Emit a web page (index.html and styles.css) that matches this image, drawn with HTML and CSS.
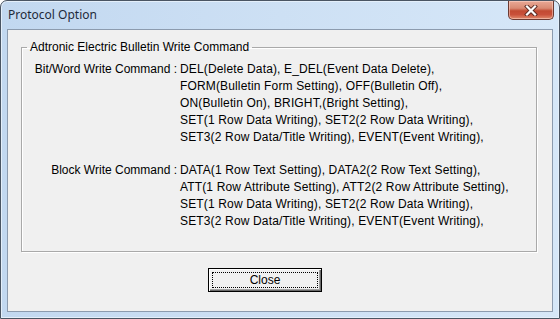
FILE: index.html
```html
<!DOCTYPE html>
<html lang="en">
<head>
	<meta charset="UTF-8">
	<title>Protocol Option</title>
	<link rel="stylesheet" href="styles.css">
</head>
<body>
	<div class="window">
		<div class="titlebar">
			<span class="title">Protocol Option</span>
			<button class="close-x" title="Close">
				<svg width="18" height="11" viewBox="0 0 18 11">
					<path d="M5 1.5 L13 9.5 M13 1.5 L5 9.5" stroke="#5a2a22" stroke-width="4" stroke-linecap="square"/>
					<path d="M5 1.5 L13 9.5 M13 1.5 L5 9.5" stroke="#ffffff" stroke-width="2.2" stroke-linecap="square"/>
				</svg>
			</button>
		</div>
		<div class="client">
			<fieldset class="group">
				<legend>Adtronic Electric Bulletin Write Command</legend>
				<div class="cmd">
					<div class="cmd-label">Bit/Word Write Command :</div>
					<div class="cmd-list">
						<div>DEL(Delete Data), E_DEL(Event Data Delete),</div>
						<div>FORM(Bulletin Form Setting), OFF(Bulletin Off),</div>
						<div>ON(Bulletin On), BRIGHT,(Bright Setting),</div>
						<div>SET(1 Row Data Writing), SET2(2 Row Data Writing),</div>
						<div>SET3(2 Row Data/Title Writing), EVENT(Event Writing),</div>
					</div>
				</div>
				<div class="cmd">
					<div class="cmd-label">Block Write Command :</div>
					<div class="cmd-list">
						<div>DATA(1 Row Text Setting), DATA2(2 Row Text Setting),</div>
						<div>ATT(1 Row Attribute Setting), ATT2(2 Row Attribute Setting),</div>
						<div>SET(1 Row Data Writing), SET2(2 Row Data Writing),</div>
						<div>SET3(2 Row Data/Title Writing), EVENT(Event Writing),</div>
					</div>
				</div>
			</fieldset>
			<div class="actions">
				<button class="btn-default"><span>Close</span></button>
			</div>
		</div>
	</div>
</body>
</html>
```
FILE: styles.css
```css
html, body {
	margin: 0;
	background: #ffffff;
}
body {
	font-family: "Liberation Sans", Arial, sans-serif;
	font-size: 12px;
	color: #000;
}
.window {
	width: 560px;
	height: 319px;
	box-sizing: border-box;
	border: 1px solid #4a5563;
	border-radius: 7px 7px 0 0;
	background: linear-gradient(90deg, #c2d8f0 0%, #cde0f4 50%, #d6e7f8 100%);
	box-shadow: inset 0 0 0 1px #e4effa;
	padding: 0 6px 6px 6px;
	display: flex;
	flex-direction: column;
}
.titlebar {
	height: 28px;
	display: flex;
	align-items: flex-start;
}
.title {
	margin: 5px 0 0 1px;
	font-family: "Noto Sans", "Liberation Sans", sans-serif;
	font-size: 12px;
	color: #1e2a3a;
}
.close-x {
	margin-left: auto;
	margin-right: -1px;
	width: 46px;
	height: 19px;
	padding: 0;
	border: 1px solid #6b3a32;
	border-top: none;
	border-radius: 0 0 5px 5px;
	background: linear-gradient(180deg, #e9a996 0%, #d98a73 40%, #c24a32 55%, #c9503a 75%, #e08a6c 100%);
	box-shadow: inset 0 0 0 1px rgba(255, 220, 210, 0.5);
	display: flex;
	align-items: center;
	justify-content: center;
}
.client {
	flex: 1;
	border: 1px solid #8c9bae;
	background: #f0f0f0;
	display: flex;
	flex-direction: column;
}
.group {
	margin: 9px 15px 0 13px;
	padding: 5px 0 21px 9px;
	border: 1px solid #a9a9a9;
	box-shadow: 1px 1px 0 #ffffff, inset 1px 1px 0 #ffffff;
}
.group legend {
	margin-left: -4px;
	padding: 0 3px;
	line-height: 17px;
}
.cmd {
	display: grid;
	grid-template-columns: 146px auto;
	column-gap: 3px;
	line-height: 17px;
	margin-bottom: 16px;
}
.cmd:last-child {
	margin-bottom: 0;
}
.cmd-label {
	text-align: right;
	white-space: nowrap;
}
.cmd-list div {
	white-space: nowrap;
	letter-spacing: 0.15px;
}
.actions {
	padding: 16px 0 0 200px;
}
.btn-default {
	width: 114px;
	height: 24px;
	padding: 3px;
	box-sizing: border-box;
	font-family: "Liberation Sans", Arial, sans-serif;
	font-size: 12px;
	background: #f0f0f0;
	border: 1px solid #000;
	box-shadow: inset 1px 1px 0 #ffffff, inset -1px -1px 0 #696969, inset -2px -2px 0 #a0a0a0;
	display: flex;
}
.btn-default span {
	flex: 1;
	border: 1px dotted #000;
	line-height: 14px;
}
```
